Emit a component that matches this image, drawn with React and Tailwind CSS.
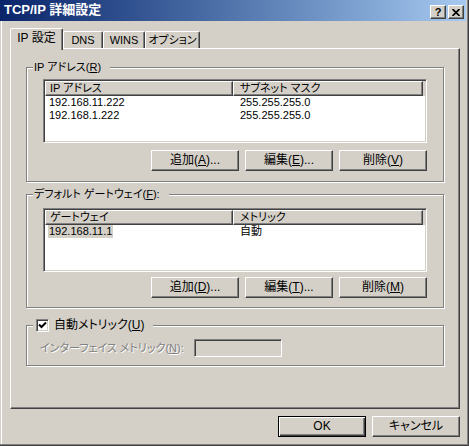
import React from 'react';

const raised =
  'border border-t-white border-l-white border-r-[#404040] border-b-[#404040] shadow-[inset_-1px_-1px_#808080]';
const sunken =
  'border border-t-[#808080] border-l-[#808080] border-r-white border-b-white shadow-[inset_1px_1px_#404040,inset_-1px_-1px_#d4d0c8]';

const Btn = ({ children, isDefault }) => (
  <button
    className={`w-[88px] h-[21px] bg-[#d4d0c8] text-black text-[12px] leading-[13px] flex items-center justify-center ${
      isDefault
        ? 'border border-black shadow-[inset_1px_1px_#fff,inset_-1px_-1px_#404040,inset_-2px_-2px_#808080]'
        : raised
    }`}
  >
    {children}
  </button>
);

const GroupBox = ({ label, className, children }) => (
  <div
    className={`relative w-[418px] border border-[#808080] shadow-[1px_1px_0_#fff,inset_1px_1px_0_#fff] ${className}`}
  >
    <div className="absolute -top-[7px] left-[6px] pl-[1px] pr-[9px] bg-[#d4d0c8] leading-[13px] flex items-center whitespace-nowrap">
      {label}
    </div>
    {children}
  </div>
);

const ListBox = ({ cols, rows }) => (
  <div className={`w-[384px] h-[64px] bg-white p-[1px] ${sunken}`}>
    <div className="flex h-[15px]">
      <div className={`w-[188px] bg-[#d4d0c8] pl-[4px] leading-[12px] ${raised}`}>{cols[0]}</div>
      <div className={`w-[190px] bg-[#d4d0c8] pl-[6px] leading-[12px] ${raised}`}>{cols[1]}</div>
      <div className="flex-1 bg-[#d4d0c8]" />
    </div>
    {rows.map((r, i) => (
      <div key={i} className="flex h-[13px] leading-[13px]">
        <div className="w-[188px] pl-[3px]">
          <span className={`px-[1px] inline-block ${r.sel ? 'bg-[#d4d0c8]' : ''}`}>{r.a}</span>
        </div>
        <div className="pl-[7px]">{r.b}</div>
      </div>
    ))}
  </div>
);

const Tab = ({ children, active, w }) => (
  <div
    className={`${w} bg-[#d4d0c8] border-t border-l border-r border-t-white border-l-white border-r-[#404040] shadow-[inset_-1px_0_#808080] rounded-t-[2px] flex items-center justify-center leading-[13px] whitespace-nowrap ${
      active ? 'h-[22px] -mb-[2px] relative z-10 pb-[2px] text-[12px]' : 'h-[17px]'
    }`}
  >
    {children}
  </div>
);

export default function App() {
  return (
    <div className="w-[469px] h-[446px] bg-[#d4d0c8] flex flex-col text-black text-[11px] font-['Liberation_Sans','Noto_Sans_CJK_JP',sans-serif] [font-feature-settings:'palt'] shadow-[inset_-1px_-1px_#404040,inset_-2px_-2px_#808080,inset_1px_0_#d4d0c8,inset_2px_0_#fff] overflow-hidden">
      {/* title bar */}
      <div className="h-[21px] mr-[3px] flex items-end pb-[2px] bg-gradient-to-r from-[#0a246a] to-[#a6caf0]">
        <div className="flex-1 self-center pl-[4px] pt-[1px] text-white font-bold text-[13px] leading-[14px]">
          TCP/IP 詳細設定
        </div>
        <div className={`w-[16px] h-[14px] bg-[#d4d0c8] flex items-center justify-center text-[11px] font-bold leading-[10px] ${raised}`}>
          ?
        </div>
        <div className={`w-[16px] h-[14px] ml-[2px] mr-[2px] bg-[#d4d0c8] flex items-center justify-center ${raised}`}>
          <svg width="8" height="7" viewBox="0 0 8 7">
            <path d="M0.5 0 L7.5 7 M7.5 0 L0.5 7" stroke="#000" strokeWidth="1.7" />
          </svg>
        </div>
      </div>

      {/* tabs + panel */}
      <div className="ml-[10px] mt-[7px] w-[450px]">
        <div className="flex items-end h-[20px]">
          <Tab active w="w-[53px]">IP 設定</Tab>
          <Tab w="w-[40px]">DNS</Tab>
          <Tab w="w-[42px]">WINS</Tab>
          <Tab w="w-[55px]">オプション</Tab>
        </div>
        <div className="h-[361px] border border-t-white border-l-white border-r-[#404040] border-b-[#404040] shadow-[inset_-1px_-1px_#808080] pl-[15px] pt-[18px]">
          <GroupBox label={<span>IP アドレス(<u>R</u>)</span>} className="h-[115px] pl-[16px] pt-[11px]">
            <ListBox
              cols={['IP アドレス', 'サブネット マスク']}
              rows={[
                { a: '192.168.11.222', b: '255.255.255.0' },
                { a: '192.168.1.222', b: '255.255.255.0' },
              ]}
            />
            <div className="w-[384px] flex justify-end gap-[6px] mt-[7px]">
              <Btn>追加(<u>A</u>)...</Btn>
              <Btn>編集(<u>E</u>)...</Btn>
              <Btn>削除(<u>V</u>)</Btn>
            </div>
          </GroupBox>

          <GroupBox
            label={<span>デフォルト ゲートウェイ(<u>F</u>):</span>}
            className="h-[114px] mt-[12px] pl-[16px] pt-[13px]"
          >
            <ListBox
              cols={['ゲートウェイ', 'メトリック']}
              rows={[{ a: '192.168.11.1', b: '自動', sel: true }]}
            />
            <div className="w-[384px] flex justify-end gap-[6px] mt-[5px]">
              <Btn>追加(<u>D</u>)...</Btn>
              <Btn>編集(<u>T</u>)...</Btn>
              <Btn>削除(<u>M</u>)</Btn>
            </div>
          </GroupBox>

          <GroupBox
            label={
              <span className="flex items-center gap-[5px] pl-[2px]">
                <span className={`w-[13px] h-[13px] bg-white flex items-center justify-center ${sunken}`}>
                  <svg width="9" height="9" viewBox="0 0 9 9">
                    <path d="M1 3.5 L3.5 6 L8 1.5" fill="none" stroke="#000" strokeWidth="2" />
                  </svg>
                </span>
                <span className="text-[12px]">自動メトリック(<u>U</u>)</span>
              </span>
            }
            className="h-[41px] mt-[17px] pl-[13px] pt-[13px]"
          >
            <div className="flex items-center">
              <span className="w-[154px] shrink-0 whitespace-nowrap text-[#808080] [text-shadow:1px_1px_0_#fff] leading-[13px]">
                インターフェイス メトリック(<u>N</u>):
              </span>
              <div className={`w-[88px] h-[18px] bg-[#d4d0c8] ${sunken}`} />
            </div>
          </GroupBox>
        </div>
      </div>

      {/* bottom buttons */}
      <div className="flex justify-end gap-[6px] mt-[7px] mr-[9px]">
        <Btn isDefault>OK</Btn>
        <Btn>キャンセル</Btn>
      </div>
    </div>
  );
}
